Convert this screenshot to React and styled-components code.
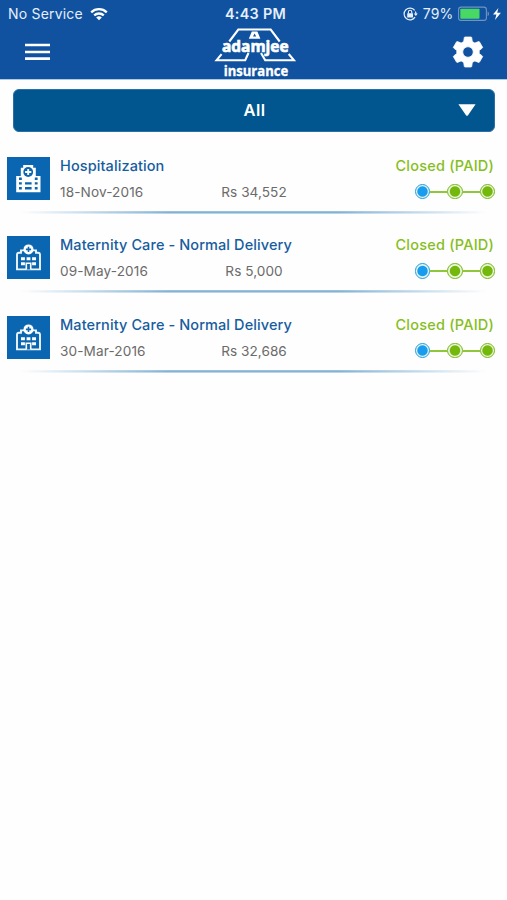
import React from 'react'
import styled, { createGlobalStyle } from 'styled-components'

const GlobalStyle = createGlobalStyle`
  html,
  body {
    margin: 0;
    background: #fefefe;
    font-family: Inter, 'Liberation Sans', sans-serif;
  }
  svg {
    display: block;
    overflow: visible;
  }
`
const Screen = styled.div`
  width: 507px;
  height: 900px;
  overflow: hidden;
  background: #fefefe;
`
const Header = styled.header`
  height: 79px;
  background: #1052a0;
  border-bottom: 1px solid #a9cbe6;
  box-sizing: content-box;
  color: #fff;
`
const StatusBar = styled.div`
  display: grid;
  grid-template-columns: 1fr auto 1fr;
  align-items: center;
  height: 26px;
  padding: 1px 4px 0 8px;
  box-sizing: border-box;
`
const StatusGroup = styled.div`
  display: flex;
  align-items: center;
  gap: ${props => props.$gap}px;
  justify-content: ${props => (props.$end ? 'flex-end' : 'flex-start')};
`
const StatusText = styled.span`
  font-size: 14px;
  line-height: 18px;
  font-weight: ${props => props.$weight || 400};
  letter-spacing: 0.2px;
  color: #e6effa;
  white-space: nowrap;
`
const Clock = styled(StatusText)`
  font-size: 14.4px;
  font-weight: 600;
  letter-spacing: 0.3px;
`
const NavBar = styled.div`
  display: flex;
  align-items: flex-start;
  justify-content: space-between;
  height: 53px;
  padding: 0 24px 0 25px;
`
const IconButton = styled.button`
  display: flex;
  padding: 0;
  border: 0;
  background: none;
  margin-top: ${props => props.$top}px;
  cursor: pointer;
`
const LogoBox = styled.div`
  margin-left: 6px;
`
const Filter = styled.button`
  display: grid;
  grid-template-columns: 1fr auto 1fr;
  align-items: center;
  width: 482px;
  height: 43px;
  margin: 9px 12px 0 13px;
  padding: 0 18px 1px 19px;
  border: 1px solid #2a70a8;
  border-radius: 6px;
  background: #01568f;
  color: #fff;
  font-family: inherit;
  font-size: 16.5px;
  font-weight: 600;
  letter-spacing: 0.4px;
  box-sizing: border-box;
  svg {
    justify-self: end;
  }
`
const List = styled.div`
  padding-top: 24.7px;
`
const Row = styled.div`
  display: flex;
  height: 54px;
  padding: 0 12px 0 7px;
`
const Tile = styled.div`
  flex: none;
  width: 43px;
  height: 43px;
  margin-right: 10px;
  background: #0b66b1;
`
const Details = styled.div`
  flex: 1;
`
const TitleLine = styled.div`
  display: flex;
  justify-content: space-between;
  height: 19.5px;
  padding-right: 1px;
  font-size: 14.5px;
  line-height: 18.4px;
  font-weight: 500;
  white-space: nowrap;
`
const Title = styled.span`
  color: #165d9f;
  letter-spacing: 0.1px;
`
const Status = styled.span`
  color: #86be22;
  letter-spacing: 0.2px;
`
const MetaLine = styled.div`
  display: grid;
  grid-template-columns: 134px 120px 1fr;
  align-items: center;
  height: 20px;
  margin-top: 5.5px;
  font-size: 13.6px;
  line-height: 20px;
  color: #6b6b6b;
`
const DateText = styled.span`
  letter-spacing: 0.12px;
`
const Amount = styled.span`
  text-align: center;
  letter-spacing: 0.05px;
`
const Tracker = styled.div`
  display: flex;
  align-items: center;
  justify-content: flex-end;
`
const Dot = styled.div`
  width: 15.5px;
  height: 15.5px;
  box-sizing: border-box;
  border: 1.5px solid ${props => props.$color};
  border-radius: 50%;
  background: radial-gradient(circle, ${props => props.$color} 4.7px, #e9f5e0 5.7px);
`
const Link = styled.div`
  width: 17px;
  height: 2px;
  background: #8fc63a;
`
const Divider = styled.div`
  height: 3px;
  margin: 0 20px 22.5px;
  background: linear-gradient(
    90deg,
    rgba(98, 158, 202, 0) 0%,
    rgba(98, 158, 202, 0.85) 32%,
    rgba(98, 158, 202, 0.85) 68%,
    rgba(98, 158, 202, 0) 100%
  );
  mask-image: linear-gradient(rgba(0, 0, 0, 0.6), #000 45%, rgba(0, 0, 0, 0.3));
`

const claims = [
  { id: 1, type: 'hospital', title: 'Hospitalization', date: '18-Nov-2016', amount: 'Rs 34,552' },
  { id: 2, type: 'maternity', title: 'Maternity Care - Normal Delivery', date: '09-May-2016', amount: 'Rs 5,000' },
  { id: 3, type: 'maternity', title: 'Maternity Care - Normal Delivery', date: '30-Mar-2016', amount: 'Rs 32,686' },
]

function WifiIcon() {
  return (
    <svg width="18" height="14" viewBox="0 0 18 14">
      <g fill="none" stroke="#fff" strokeWidth="2.3">
        <path d="M1.2 5.3a11.2 11.2 0 0 1 15.6 0" />
        <path d="M4.2 8.4a7 7 0 0 1 9.6 0" />
      </g>
      <path d="M6.2 10.5a4.2 4.2 0 0 1 5.6 0L9 13.3z" fill="#fff" />
    </svg>
  )
}

function LockIcon() {
  return (
    <svg width="15" height="14" viewBox="0 0 15 14">
      <path d="M11.7 3.4A5.9 5.9 0 1 0 12 10.1M12.4 4.6a5.9 5.9 0 0 1 .5 3" fill="none" stroke="#e6effa" strokeWidth="1.2" />
      <path d="M10.8 6.6h4l-2 2.5z" fill="#e6effa" />
      <rect x="4.2" y="6.2" width="5.8" height="4.3" rx="0.5" fill="#e6effa" />
      <path d="M5.4 6.4V5a1.7 1.7 0 0 1 3.4 0v1.4" fill="none" stroke="#e6effa" strokeWidth="1.1" />
    </svg>
  )
}

function BatteryIcon() {
  return (
    <svg width="45" height="16" viewBox="0 0 45 16">
      <rect x="0.6" y="1.1" width="27.8" height="13.3" rx="2.5" fill="none" stroke="#6f94c2" strokeWidth="1.1" />
      <rect x="2.3" y="2.8" width="19.2" height="9.9" rx="0.8" fill="#48d864" />
      <path d="M29.6 5.4c1.8.6 1.8 4.1 0 4.7z" fill="#6f94c2" />
      <path d="M40.4 2L35 8.6h3.4L37 14l5.9-7.2h-3.7z" fill="#fff" />
    </svg>
  )
}

function Logo() {
  return (
    <svg width="84" height="53" viewBox="212 26 84 53">
      <path d="M247.5 53l-3.3 7.2H215.6l5-6M228.3 41.5l9-12h32.4l9 12M287.7 54l5.2 6.2H264.2L260 53" fill="none" stroke="#fff" strokeWidth="2.1" />
      <path d="M250.8 31.4h5.6l3 7.4h-11.6z" fill="#fff" />
      <path d="M253.6 33.6l1.6 3h-3.2z" fill="#1052a0" />
      <g fill="#fff" stroke="#fff" fontFamily="'Open Sans', sans-serif" fontWeight="700">
        <text x="221" y="51.7" fontSize="16.5" textLength="66.5" lengthAdjust="spacingAndGlyphs" strokeWidth="0.7">adamjee</text>
        <text x="222.7" y="76.3" fontSize="15" textLength="64.5" lengthAdjust="spacingAndGlyphs" strokeWidth="0.35">insurance</text>
      </g>
    </svg>
  )
}

function GearIcon() {
  return (
    <svg width="30" height="30" viewBox="2 2 20 20">
      <path
        fill="#fff"
        stroke="#fff"
        strokeWidth="0.5"
        strokeLinejoin="round"
        d="M19.43 12.98c.04-.32.07-.64.07-.98s-.03-.66-.07-.98l2.11-1.65c.19-.15.24-.42.12-.64l-2-3.46c-.12-.22-.39-.3-.61-.22l-2.49 1c-.52-.4-1.08-.73-1.69-.98l-.38-2.65A.488.488 0 0 0 14 2h-4c-.25 0-.46.18-.49.42l-.38 2.65c-.61.25-1.17.59-1.69.98l-2.49-1c-.23-.09-.49 0-.61.22l-2 3.46c-.13.22-.07.49.12.64l2.11 1.65c-.04.32-.07.65-.07.98s.03.66.07.98l-2.11 1.65c-.19.15-.24.42-.12.64l2 3.46c.12.22.39.3.61.22l2.49-1c.52.4 1.08.73 1.69.98l.38 2.65c.03.24.24.42.49.42h4c.25 0 .46-.18.49-.42l.38-2.65c.61-.25 1.17-.59 1.69-.98l2.49 1c.23.09.49 0 .61-.22l2-3.46c.12-.22.07-.49-.12-.64l-2.11-1.65zM12 15.5c-1.93 0-3.5-1.57-3.5-3.5s1.57-3.5 3.5-3.5 3.5 1.57 3.5 3.5-1.57 3.5-3.5 3.5z"
      />
    </svg>
  )
}

function HospitalIcon() {
  return (
    <svg width="43" height="43" viewBox="0 0 43 43">
      <path d="M9.2 35.3V19h4.6v-8.3h2.4V8h10v2.7h2.6V19h4.7v16.3z" fill="#fff" />
      <circle cx="21.2" cy="15" r="4.9" fill="#0b66b1" />
      <path d="M21.2 11.9v6.2M18.1 15h6.2" stroke="#fff" strokeWidth="1.9" />
      <g fill="#0b66b1">
        <path d="M12 20.6h2.8v2.4H12zM27.8 20.6h2.8v2.4h-2.8zM12 25.2h2.8v2.4H12zM27.8 25.2h2.8v2.4h-2.8zM12 30h2.8v2.4H12zM27.8 30h2.8v2.4h-2.8z" />
        <path d="M18 25.2h6.6v2.4H18zM18 30h6.6v2.4H18z" />
      </g>
    </svg>
  )
}

function MaternityIcon() {
  return (
    <svg width="43" height="43" viewBox="0 0 43 43">
      <path d="M17 14.4h-3v2.4h-2q-2 0-2 2v14.6h23V18.8q0-2-2-2h-2v-2.4h-3" fill="none" stroke="#edf5fc" strokeWidth="1.9" />
      <circle cx="21.5" cy="13.4" r="5" fill="#fff" />
      <path d="M21.5 10.8V16M18.9 13.4h5.2" stroke="#0b66b1" strokeWidth="1.6" />
      <path d="M14 21.3h3.9v2.9H14zM19.6 21.3h3.8v2.9h-3.8zM25.1 21.3H29v2.9h-3.9zM14 26.3h3.9v2.9H14zM25.1 26.3H29v2.9h-3.9z" fill="#fff" />
      <path d="M19.3 33.5v-6.3h4.4v6.3" fill="#0b66b1" stroke="#fff" strokeWidth="1.6" />
    </svg>
  )
}

function Claim({ type, title, date, amount }) {
  return (
    <div>
      <Row>
        <Tile>{type === 'hospital' ? <HospitalIcon /> : <MaternityIcon />}</Tile>
        <Details>
          <TitleLine>
            <Title>{title}</Title>
            <Status>Closed (PAID)</Status>
          </TitleLine>
          <MetaLine>
            <DateText>{date}</DateText>
            <Amount>{amount}</Amount>
            <Tracker>
              <Dot $color="#179cf0" />
              <Link />
              <Dot $color="#74b80c" />
              <Link />
              <Dot $color="#74b80c" />
            </Tracker>
          </MetaLine>
        </Details>
      </Row>
      <Divider />
    </div>
  )
}

function App() {
  return (
    <Screen>
      <GlobalStyle />
      <Header>
        <StatusBar>
          <StatusGroup $gap={7}>
            <StatusText>No Service</StatusText>
            <WifiIcon />
          </StatusGroup>
          <Clock>4:43 PM</Clock>
          <StatusGroup $end $gap={4.5}>
            <LockIcon />
            <StatusText>79%</StatusText>
            <BatteryIcon />
          </StatusGroup>
        </StatusBar>
        <NavBar>
          <IconButton $top={17} aria-label="Menu">
            <svg width="25" height="18" viewBox="0 0 25 18">
              <path d="M0 2h25M0 9h25M0 15.6h25" stroke="#fff" strokeWidth="2.6" />
            </svg>
          </IconButton>
          <LogoBox>
            <Logo />
          </LogoBox>
          <IconButton $top={11} aria-label="Settings">
            <GearIcon />
          </IconButton>
        </NavBar>
      </Header>
      <Filter>
        <span />
        <span>All</span>
        <svg width="18" height="12" viewBox="0 0 18 12">
          <path d="M0.4 0.3h17.2L10 11.2q-1 1.2-2 0z" fill="#fff" />
        </svg>
      </Filter>
      <List>
        {claims.map(claim => <Claim key={claim.id} {...claim} />)}
      </List>
    </Screen>
  )
}

export default App
